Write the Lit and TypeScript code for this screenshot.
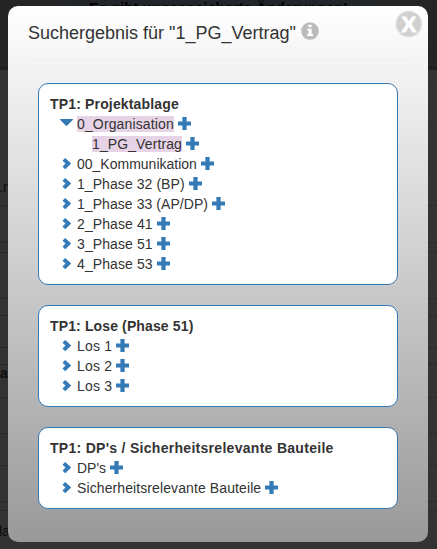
import { LitElement, html, css, svg } from "lit";
import { customElement } from "lit/decorators.js";
import { classMap } from "lit/directives/class-map.js";

interface Entry { label: string; open?: boolean; hit?: boolean; child?: boolean; tracking?: number; }
interface Group { title: string; tracking: number; entries: Entry[]; }

const groups: Group[] = [
  {
    title: "TP1: Projektablage",
    tracking: 0.16,
    entries: [
      { label: "0_Organisation", open: true, hit: true, tracking: 0.14 },
      { label: "1_PG_Vertrag", hit: true, child: true, tracking: 0.1 },
      { label: "00_Kommunikation" },
      { label: "1_Phase 32 (BP)", tracking: 0.07 },
      { label: "1_Phase 33 (AP/DP)", tracking: 0.06 },
      { label: "2_Phase 41", tracking: 0.1 },
      { label: "3_Phase 51", tracking: 0.1 },
      { label: "4_Phase 53", tracking: 0.1 },
    ],
  },
  {
    title: "TP1: Lose (Phase 51)",
    tracking: 0.13,
    entries: [
      { label: "Los 1", tracking: 0.2 },
      { label: "Los 2", tracking: 0.2 },
      { label: "Los 3", tracking: 0.2 },
    ],
  },
  {
    title: "TP1: DP's / Sicherheitsrelevante Bauteile",
    tracking: 0.29,
    entries: [{ label: "DP's" }, { label: "Sicherheitsrelevante Bauteile", tracking: 0.1 }],
  },
];

// Rows of the dimmed page: height up to and including the divider line.
const pageRows: { height: number; text?: string; bold?: boolean }[] = [
  { height: 136, text: ".n" },
  { height: 37 },
  { height: 10 },
  { height: 46 },
  { height: 17 },
  { height: 32 },
  { height: 17 },
  { height: 33, text: "a", bold: true },
  { height: 36 },
  { height: 32 },
  { height: 36 },
  { height: 9 },
  { height: 39, text: "la" },
];

const chevron = svg`<path d="M.5 2.7 3.2 0 9.2 5.6 3.2 11.2 .5 8.5 3.5 5.6Z"/>`;
const triangle = svg`<path d="M0.4 0H12.6Q13.2 .3 12.7 .9L7.3 6.4Q6.5 7 5.7 6.4L.3 .9Q-.2 .3 .4 0Z"/>`;
const plus = svg`<path d="M4.4 0H8.6V4.5H13V8.5H8.6V13H4.4V8.5H0V4.5H4.4Z"/>`;

@customElement("app-root")
export class AppRoot extends LitElement {
  static styles = css`
    :host {
      display: block;
      position: relative;
      height: 549px;
      overflow: hidden;
      background: #333;
      color: #333;
      font: 14px/20px "Liberation Sans", Arial, sans-serif;
    }
    .page-head {
      box-sizing: border-box;
      height: 70px;
      background: linear-gradient(90deg, #252525, #22262a 25%, #22262a 75%, #252525);
      border-bottom: 4px solid #1f1f1f;
      color: #000;
      text-align: center;
      font-weight: bold;
      font-size: 14.8px;
      line-height: 17px;
    }
    .page-row {
      box-sizing: border-box;
      display: flex;
      align-items: flex-end;
      border-bottom: 1px solid #292929;
      color: #0c0c0c;
      padding-bottom: 8px;
      text-indent: -1px;
    }
    .page-row:empty { padding: 0; }
    .page-row.bold { font-weight: bold; padding-bottom: 14px; text-indent: 0; }
    .dialog {
      position: absolute;
      inset: 6px 9px 7px 8px;
      box-sizing: border-box;
      border-radius: 10px;
      padding: 12px 20px 0;
      background: linear-gradient(#fff, #999);
    }
    .head {
      display: flex;
      align-items: flex-start;
      height: 43px;
      box-sizing: border-box;
      border-bottom: 1px solid #eee;
      margin-bottom: 22px;
    }
    h1 { margin: 1px 0 0; font-size: 18px; line-height: 28px; font-weight: normal; white-space: nowrap; }
    .info { width: 18px; height: 18px; margin: 4px 0 0 5px; fill: #bbb; }
    .close { position: absolute; right: 5px; top: 4px; width: 28px; height: 28px; }
    .groups { display: flex; flex-direction: column; gap: 20px; padding: 0 10px; }
    .card { background: #fff; border: 1px solid #337ab7; border-radius: 10px; padding: 10px 11px; }
    .title { font-weight: bold; white-space: nowrap; }
    .entry { display: flex; height: 20px; padding-left: 10px; align-items: center; white-space: nowrap; }
    .entry.child { padding-left: 25px; }
    .toggle { width: 17px; display: flex; padding-left: 2px; box-sizing: border-box; }
    .entry.open .toggle { padding: 0 0 3px; }
    svg { display: block; fill: #337ab7; flex: none; }
    .label { line-height: 16px; }
    .hit { background: #e6d3e6; }
    .plus { margin: 0 0 1px 4px; }
  `;

  render() {
    return html`
      <div class="page-head">Es gibt ungespeicherte Änderungen!</div>
      ${pageRows.map(
        (r) => html`<div class=${classMap({ "page-row": true, bold: !!r.bold })} style="height:${r.height}px">${r.text ?? ""}</div>`
      )}
      <section class="dialog">
        <div class="head">
          <h1>Suchergebnis für "1_PG_Vertrag"</h1>
          <svg class="info" viewBox="0 0 18 18">
            <circle cx="9" cy="9" r="8.8" />
            <path fill="#fff" d="M7.4 2.8h3.2v2.5H7.4zM6.2 6.7h4.4v5.2h1.5v2H6.2v-2h1.4V8.6H6.2z" />
          </svg>
        </div>
        <svg class="close" viewBox="0 0 28 28">
          <circle cx="13.8" cy="14" r="13.4" fill="#e4e4e4" />
          <circle cx="13.8" cy="14" r="12.2" fill="#d0d0d0" />
          <text x="13.8" y="22" text-anchor="middle" font-size="22" font-weight="bold" fill="#fff" stroke="#fff" stroke-width=".9">X</text>
        </svg>
        <div class="groups">
          ${groups.map(
            (g) => html`<div class="card">
              <div class="title" style="letter-spacing:${g.tracking}px">${g.title}</div>
              ${g.entries.map((e) => this.entry(e))}
            </div>`
          )}
        </div>
      </section>
    `;
  }

  private entry(e: Entry) {
    return html`<div class=${classMap({ entry: true, open: !!e.open, child: !!e.child })}>
      <span class="toggle">
        ${e.open
          ? html`<svg width="13" height="7" viewBox="0 0 13 7">${triangle}</svg>`
          : e.child
            ? ""
            : html`<svg width="10" height="12" viewBox="0 0 10 12">${chevron}</svg>`}
      </span>
      <span class=${classMap({ label: true, hit: !!e.hit })} style="letter-spacing:${e.tracking ?? 0}px">${e.label}</span>
      <svg class="plus" width="13" height="13" viewBox="0 0 13 13">${plus}</svg>
    </div>`;
  }
}
